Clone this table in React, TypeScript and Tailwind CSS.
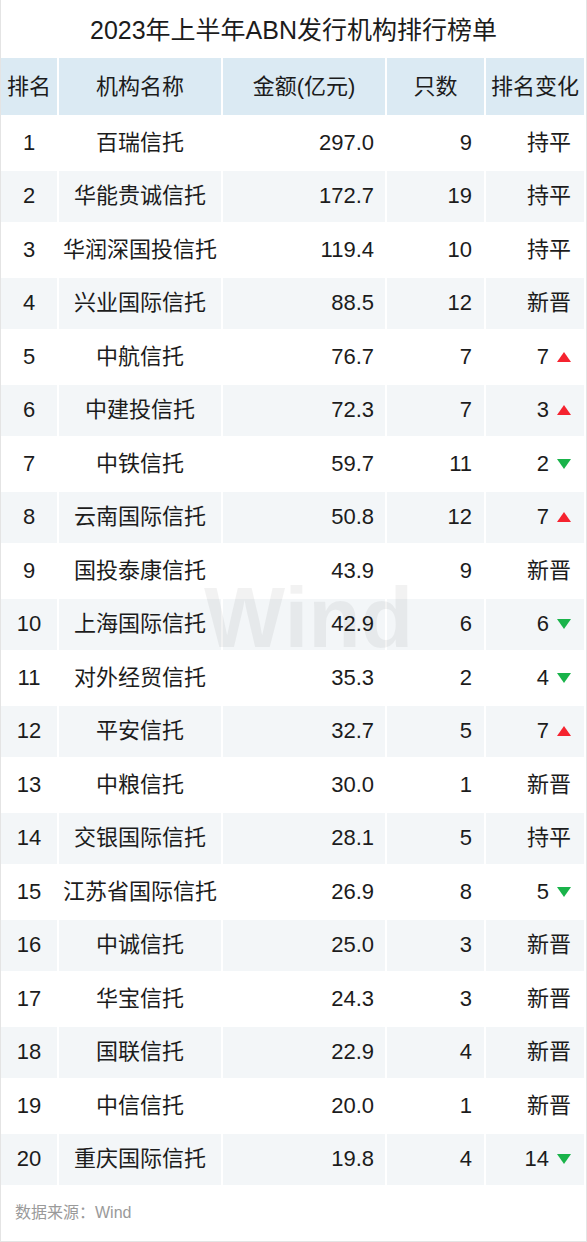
import React from "react";

type Row = [number, string, string, number, string, ("up" | "down" | null)?];

const rows: Row[] = [
  [1, "百瑞信托", "297.0", 9, "持平"],
  [2, "华能贵诚信托", "172.7", 19, "持平"],
  [3, "华润深国投信托", "119.4", 10, "持平"],
  [4, "兴业国际信托", "88.5", 12, "新晋"],
  [5, "中航信托", "76.7", 7, "7", "up"],
  [6, "中建投信托", "72.3", 7, "3", "up"],
  [7, "中铁信托", "59.7", 11, "2", "down"],
  [8, "云南国际信托", "50.8", 12, "7", "up"],
  [9, "国投泰康信托", "43.9", 9, "新晋"],
  [10, "上海国际信托", "42.9", 6, "6", "down"],
  [11, "对外经贸信托", "35.3", 2, "4", "down"],
  [12, "平安信托", "32.7", 5, "7", "up"],
  [13, "中粮信托", "30.0", 1, "新晋"],
  [14, "交银国际信托", "28.1", 5, "持平"],
  [15, "江苏省国际信托", "26.9", 8, "5", "down"],
  [16, "中诚信托", "25.0", 3, "新晋"],
  [17, "华宝信托", "24.3", 3, "新晋"],
  [18, "国联信托", "22.9", 4, "新晋"],
  [19, "中信信托", "20.0", 1, "新晋"],
  [20, "重庆国际信托", "19.8", 4, "14", "down"],
];

function Tri({ dir }: { dir: "up" | "down" }) {
  return (
    <svg width="14" height="10" viewBox="0 0 14 10" className="ml-[8px] shrink-0">
      {dir === "up" ? (
        <polygon points="7,0 14,10 0,10" fill="#f5232f" />
      ) : (
        <polygon points="0,0 14,0 7,10" fill="#19b34a" />
      )}
    </svg>
  );
}

export default function App() {
  return (
    <div
      className="relative w-[587px] h-[1242px] bg-white border-x border-b border-[#e4e4e4] overflow-hidden text-[#1c1c1c]"
      style={{ fontFamily: '"Liberation Sans", Arial, "Noto Sans CJK SC", sans-serif' }}
    >
      <div className="h-[58px] flex items-center justify-center text-[25px] leading-none pt-[2px]">
        2023年上半年ABN发行机构排行榜单
      </div>
      <div className="relative">
        <div className="grid grid-cols-[56px_162px_162px_97px_98px] gap-[2px] text-[22px] leading-none">
          <div className="h-[57px] bg-[#dbeaf3] flex items-center justify-center">排名</div>
          <div className="h-[57px] bg-[#dbeaf3] flex items-center justify-center">机构名称</div>
          <div className="h-[57px] bg-[#dbeaf3] flex items-center justify-center">金额(亿元)</div>
          <div className="h-[57px] bg-[#dbeaf3] flex items-center justify-center">只数</div>
          <div className="h-[57px] bg-[#dbeaf3] flex items-center justify-center">排名变化</div>
          {rows.map((r) => {
            const bg = r[0] % 2 === 0 ? "bg-[#f3f6f8]" : "bg-white";
            return (
              <React.Fragment key={r[0]}>
                <div className={`h-[51.5px] ${bg} flex items-center justify-center`}>{r[0]}</div>
                <div className={`h-[51.5px] ${bg} flex items-center justify-center whitespace-nowrap`}>{r[1]}</div>
                <div className={`h-[51.5px] ${bg} flex items-center justify-end pr-[11px]`}>{r[2]}</div>
                <div className={`h-[51.5px] ${bg} flex items-center justify-end pr-[12px]`}>{r[3]}</div>
                <div className={`h-[51.5px] ${bg} flex items-center justify-end pr-[13px]`}>
                  <span>{r[4]}</span>
                  {r[5] ? <Tri dir={r[5]} /> : null}
                </div>
              </React.Fragment>
            );
          })}
        </div>
        <div
          aria-hidden="true"
          className="absolute left-[203px] top-[516px] text-[86px] font-bold leading-none text-black/[0.05] pointer-events-none select-none"
        >
          Wind
        </div>
      </div>
      <div className="pl-[14px] pt-[20px] text-[16px] leading-none text-[#9a9a9a]">数据来源：Wind</div>
    </div>
  );
}
